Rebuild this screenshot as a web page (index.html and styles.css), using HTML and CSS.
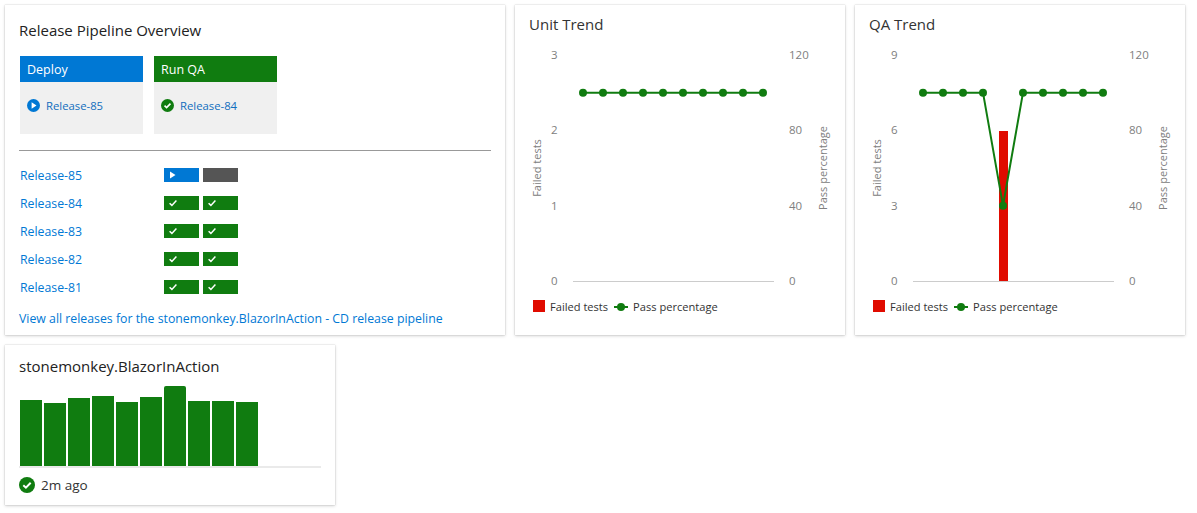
FILE: index.html
```html
<!DOCTYPE html>
<html lang="en">
<head>
  <meta charset="UTF-8">
  <title>Dashboard</title>
  <link rel="stylesheet" href="styles.css">
</head>
<body>
  <div class="dashboard">

    <!-- release pipeline widget -->
    <section class="widget pipeline">
      <h2 class="pipeline-title">Release Pipeline Overview</h2>
      <div class="stages">
        <div class="stage">
          <div class="stage-head blue">Deploy</div>
          <div class="stage-body">
            <svg class="stage-icon" viewBox="0 0 14 14"><circle cx="7" cy="7" r="7" fill="#0078d4"/><path d="M5 3.600 10.200 7 5 10.400z" fill="#fff"/></svg>
            <a href="#">Release-85</a>
          </div>
        </div>
        <div class="stage">
          <div class="stage-head green">Run QA</div>
          <div class="stage-body">
            <svg class="stage-icon" viewBox="0 0 14 14"><circle cx="7" cy="7" r="7" fill="#107c10"/><path d="M3.800 7.200 6 9.300 10.200 5" fill="none" stroke="#fff" stroke-width="1.700"/></svg>
            <a href="#">Release-84</a>
          </div>
        </div>
      </div>
      <hr class="divider">
      <ul class="releases">
        <li>
          <a href="#">Release-85</a>
          <span class="chips">
            <span class="chip blue"><svg viewBox="0 0 8 8"><path d="M1 .5 6.500 4 1 7.500z" fill="#fff"/></svg></span>
            <span class="chip grey"></span>
          </span>
        </li>
        <li>
          <a href="#">Release-84</a>
          <span class="chips">
            <span class="chip green"><svg viewBox="0 0 8 8"><path d="M.6 4.300 2.900 6.400 7.400 1.600" fill="none" stroke="#fff" stroke-width="1.500"/></svg></span>
            <span class="chip green"><svg viewBox="0 0 8 8"><path d="M.6 4.300 2.900 6.400 7.400 1.600" fill="none" stroke="#fff" stroke-width="1.500"/></svg></span>
          </span>
        </li>
        <li>
          <a href="#">Release-83</a>
          <span class="chips">
            <span class="chip green"><svg viewBox="0 0 8 8"><path d="M.6 4.300 2.900 6.400 7.400 1.600" fill="none" stroke="#fff" stroke-width="1.500"/></svg></span>
            <span class="chip green"><svg viewBox="0 0 8 8"><path d="M.6 4.300 2.900 6.400 7.400 1.600" fill="none" stroke="#fff" stroke-width="1.500"/></svg></span>
          </span>
        </li>
        <li>
          <a href="#">Release-82</a>
          <span class="chips">
            <span class="chip green"><svg viewBox="0 0 8 8"><path d="M.6 4.300 2.900 6.400 7.400 1.600" fill="none" stroke="#fff" stroke-width="1.500"/></svg></span>
            <span class="chip green"><svg viewBox="0 0 8 8"><path d="M.6 4.300 2.900 6.400 7.400 1.600" fill="none" stroke="#fff" stroke-width="1.500"/></svg></span>
          </span>
        </li>
        <li>
          <a href="#">Release-81</a>
          <span class="chips">
            <span class="chip green"><svg viewBox="0 0 8 8"><path d="M.6 4.300 2.900 6.400 7.400 1.600" fill="none" stroke="#fff" stroke-width="1.500"/></svg></span>
            <span class="chip green"><svg viewBox="0 0 8 8"><path d="M.6 4.300 2.900 6.400 7.400 1.600" fill="none" stroke="#fff" stroke-width="1.500"/></svg></span>
          </span>
        </li>
      </ul>
      <a class="all-releases" href="#">View all releases for the stonemonkey.BlazorInAction - CD release pipeline</a>
    </section>

    <!-- unit trend widget -->
    <section class="widget trend">
      <h2 class="trend-title">Unit Trend</h2>
      <svg class="chart" viewBox="0 0 330 250">
        <text class="tick" x="36" y="14">3</text>
        <text class="tick" x="36" y="89">2</text>
        <text class="tick" x="36" y="165">1</text>
        <text class="tick" x="36" y="240">0</text>
        <text class="tick" x="274" y="14">120</text>
        <text class="tick" x="274" y="89">80</text>
        <text class="tick" x="274" y="165">40</text>
        <text class="tick" x="274" y="240">0</text>
        <text class="axis-name" transform="translate(26 123) rotate(-90)">Failed tests</text>
        <text class="axis-name" transform="translate(312 123) rotate(-90)">Pass percentage</text>
        <path class="baseline" d="M58 236.500H259"/>
        <polyline class="line" points="68,47.700 248,47.700"/>
        <g class="dots">
          <circle cx="68" cy="47.700" r="4"/><circle cx="88" cy="47.700" r="4"/><circle cx="108" cy="47.700" r="4"/><circle cx="128" cy="47.700" r="4"/><circle cx="148" cy="47.700" r="4"/><circle cx="168" cy="47.700" r="4"/><circle cx="188" cy="47.700" r="4"/><circle cx="208" cy="47.700" r="4"/><circle cx="228" cy="47.700" r="4"/><circle cx="248" cy="47.700" r="4"/>
        </g>
      </svg>
      <div class="legend">
        <span class="swatch"></span><span>Failed tests</span>
        <svg class="marker" viewBox="0 0 14 8"><path d="M0 4H14" stroke="#107c10" stroke-width="2"/><circle cx="7" cy="4" r="4" fill="#107c10"/></svg><span>Pass percentage</span>
      </div>
    </section>

    <!-- qa trend widget -->
    <section class="widget trend">
      <h2 class="trend-title">QA Trend</h2>
      <svg class="chart" viewBox="0 0 330 250">
        <text class="tick" x="36" y="14">9</text>
        <text class="tick" x="36" y="89">6</text>
        <text class="tick" x="36" y="165">3</text>
        <text class="tick" x="36" y="240">0</text>
        <text class="tick" x="274" y="14">120</text>
        <text class="tick" x="274" y="89">80</text>
        <text class="tick" x="274" y="165">40</text>
        <text class="tick" x="274" y="240">0</text>
        <text class="axis-name" transform="translate(26 123) rotate(-90)">Failed tests</text>
        <text class="axis-name" transform="translate(312 123) rotate(-90)">Pass percentage</text>
        <path class="baseline" d="M58 236.500H259"/>
        <rect class="fail-bar" x="144" y="86" width="9" height="150"/>
        <polyline class="line" points="68,47.700 128,47.700 148,160.700 168,47.700 248,47.700"/>
        <g class="dots">
          <circle cx="68" cy="47.700" r="4"/><circle cx="88" cy="47.700" r="4"/><circle cx="108" cy="47.700" r="4"/><circle cx="128" cy="47.700" r="4"/><circle cx="148" cy="160.700" r="4"/><circle cx="168" cy="47.700" r="4"/><circle cx="188" cy="47.700" r="4"/><circle cx="208" cy="47.700" r="4"/><circle cx="228" cy="47.700" r="4"/><circle cx="248" cy="47.700" r="4"/>
        </g>
      </svg>
      <div class="legend">
        <span class="swatch"></span><span>Failed tests</span>
        <svg class="marker" viewBox="0 0 14 8"><path d="M0 4H14" stroke="#107c10" stroke-width="2"/><circle cx="7" cy="4" r="4" fill="#107c10"/></svg><span>Pass percentage</span>
      </div>
    </section>

    <!-- build history widget -->
    <section class="widget build">
      <h2 class="build-title">stonemonkey.BlazorInAction</h2>
      <div class="history">
        <span class="bar" style="height: 66px"></span>
        <span class="bar" style="height: 63px"></span>
        <span class="bar" style="height: 68px"></span>
        <span class="bar" style="height: 70px"></span>
        <span class="bar" style="height: 64px"></span>
        <span class="bar" style="height: 69px"></span>
        <span class="bar" style="height: 80px"></span>
        <span class="bar" style="height: 65px"></span>
        <span class="bar" style="height: 65px"></span>
        <span class="bar" style="height: 64px"></span>
      </div>
      <div class="build-status">
        <svg class="status-icon" viewBox="0 0 16 16"><circle cx="8" cy="8" r="8" fill="#107c10"/><path d="M4.300 8.300 6.900 10.700 11.700 5.800" fill="none" stroke="#fff" stroke-width="2"/></svg>
        <span>2m ago</span>
      </div>
    </section>

  </div>
</body>
</html>
```

FILE: styles.css
```css
body {
  margin: 0;
  padding: 5px;
  background: #fff;
  color: #333;
  font-family: "Open Sans", "Liberation Sans", sans-serif;
  font-size: 12px;
}

a {
  color: #0078d4;
  text-decoration: none;
}

h2 {
  margin: 0;
  font-weight: 400;
}

.dashboard {
  display: grid;
  grid-template-columns: 500px 330px 330px;
  grid-template-rows: 330px 160px;
  gap: 10px;
}

.widget {
  background: #fff;
  box-shadow: 0 0 1px rgba(0, 0, 0, 0.25), 0 1px 3px rgba(0, 0, 0, 0.18);
  overflow: hidden;
}

.blue { background: #0078d4; }
.green { background: #107c10; }
.grey { background: #555; }

/* pipeline */
.pipeline {
  padding: 14px 14px 0;
}

.pipeline-title {
  height: 22px;
  font-size: 15px;
  line-height: 22px;
  color: #222;
}

.stages {
  display: flex;
  gap: 11px;
  margin: 15px 0 0 1px;
}

.stage {
  width: 123px;
  height: 78px;
  background: #f0f0f0;
}

.stage-head {
  height: 26px;
  padding-left: 7px;
  color: #fff;
  font-size: 12.500px;
  line-height: 27px;
}

.stage-body {
  display: flex;
  align-items: center;
  gap: 6px;
  height: 46px;
  padding-left: 7px;
  font-size: 11.300px;
}

.stage-body a {
  color: #106ebe;
}

.stage-icon {
  width: 13px;
  height: 13px;
}

.divider {
  margin: 16px 0 0;
  border: 0;
  border-top: 1px solid #999;
}

.releases {
  margin: 10px 0 0;
  padding: 0;
  list-style: none;
}

.releases li {
  display: flex;
  align-items: center;
  height: 28px;
  padding-left: 1px;
}

.releases a {
  width: 144px;
  font-size: 12.300px;
}

.chips {
  display: flex;
  gap: 4px;
}

.chip {
  display: flex;
  align-items: center;
  width: 35px;
  height: 14px;
  padding-left: 5px;
  box-sizing: border-box;
}

.chip svg {
  width: 8px;
  height: 8px;
}

.all-releases {
  display: block;
  margin-top: 9px;
  font-size: 12.300px;
  white-space: nowrap;
}

/* trend charts */
.trend-title {
  height: 40px;
  padding: 7px 0 0 14px;
  box-sizing: border-box;
  font-size: 15px;
  line-height: 24px;
  color: #333;
}

.chart {
  display: block;
  width: 330px;
  height: 250px;
}

.tick {
  font-size: 11.500px;
  fill: #808080;
}

.axis-name {
  font-size: 11px;
  fill: #808080;
  text-anchor: middle;
}

.baseline {
  stroke: #ccc;
  stroke-width: 1;
  fill: none;
}

.fail-bar {
  fill: #e00b00;
}

.line {
  stroke: #107c10;
  stroke-width: 2;
  fill: none;
}

.dots {
  fill: #107c10;
}

.legend {
  display: flex;
  align-items: center;
  height: 22px;
  padding-left: 18px;
  font-size: 11.100px;
  color: #333;
}

.swatch {
  width: 12px;
  height: 12px;
  margin-right: 5px;
  background: #e00b00;
}

.marker {
  width: 14px;
  height: 8px;
  margin: 2px 5px 0 6px;
}

/* build history */
.build {
  grid-column: 1;
  width: 330px;
  padding: 9px 14px 0;
  box-sizing: border-box;
}

.build-title {
  height: 25px;
  font-size: 15px;
  line-height: 24px;
  color: #222;
}

.history {
  display: flex;
  align-items: flex-end;
  gap: 2px;
  height: 87px;
  padding-left: 1px;
  border-bottom: 2px solid #eaeaea;
}

.bar {
  width: 22px;
  background: #107c10;
}

.bar:nth-child(7) {
  border-radius: 2px 2px 0 0;
}

.build-status {
  display: flex;
  align-items: center;
  gap: 6px;
  height: 34px;
  font-size: 13.500px;
  color: #333;
}

.status-icon {
  width: 16px;
  height: 16px;
}
```
